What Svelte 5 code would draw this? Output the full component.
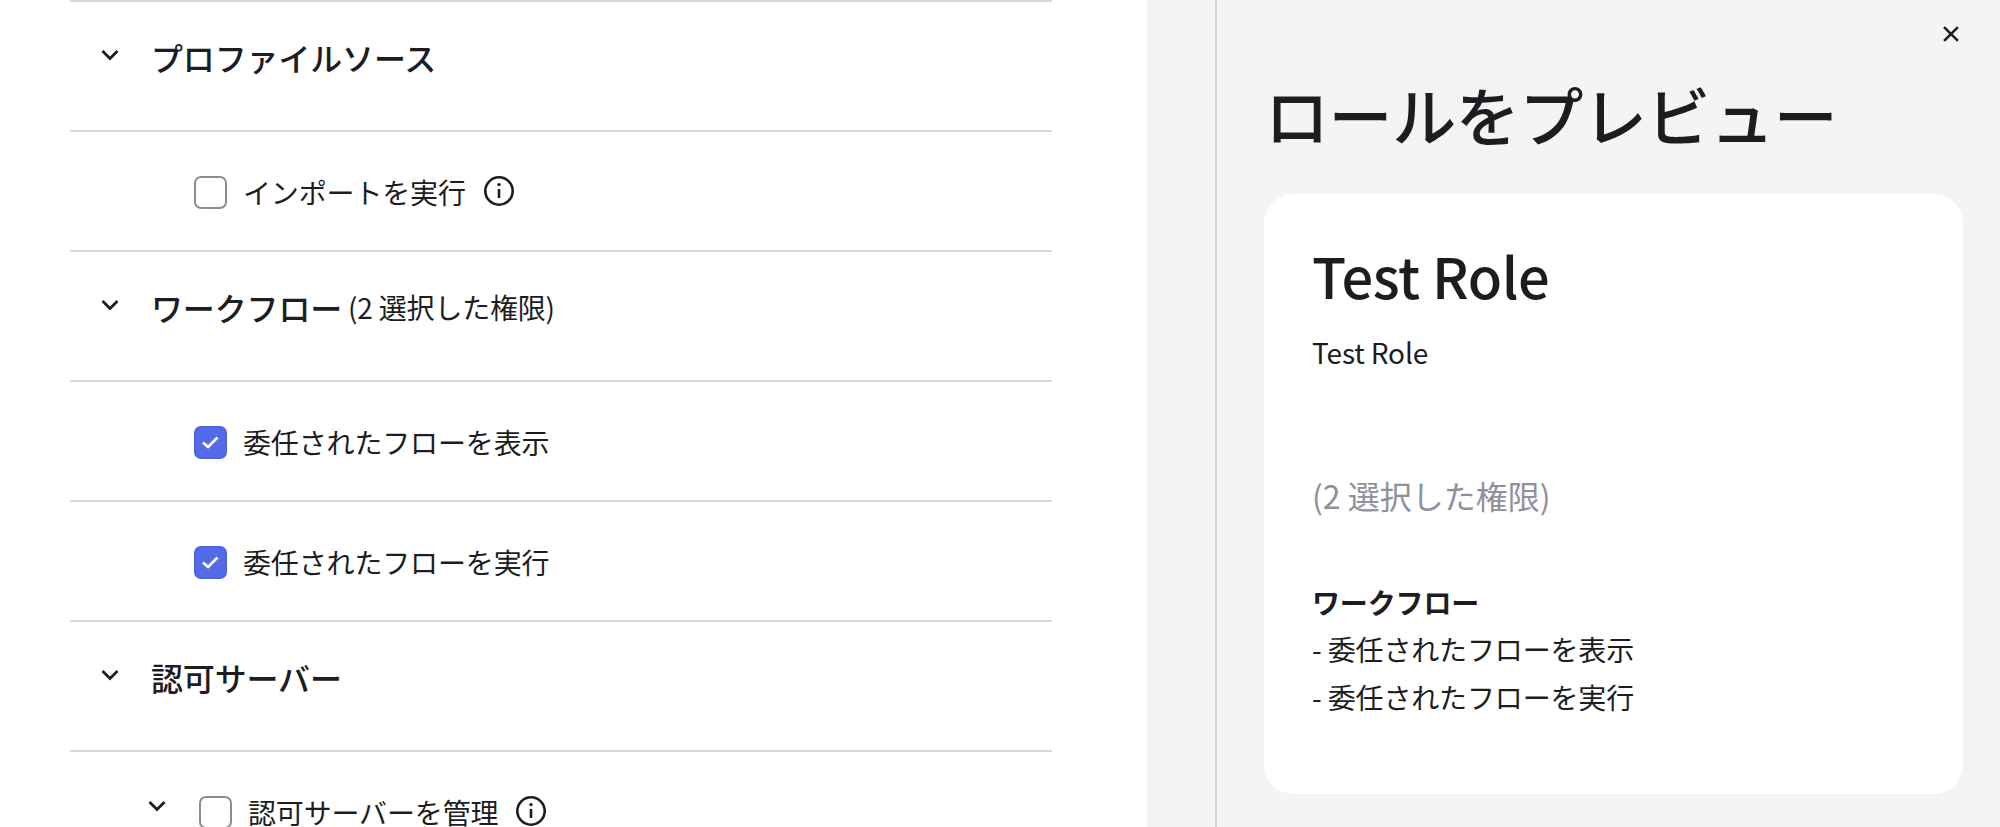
<script lang="ts">
  type Permission = { label: string; checked: boolean; info?: boolean; nested?: boolean }
  type Section = { title: string; selected?: string; permissions: Permission[] }

  const sections: Section[] = [
    { title: 'プロファイルソース', permissions: [{ label: 'インポートを実行', checked: false, info: true }] },
    {
      title: 'ワークフロー',
      selected: '(2 選択した権限)',
      permissions: [
        { label: '委任されたフローを表示', checked: true },
        { label: '委任されたフローを実行', checked: true },
      ],
    },
    { title: '認可サーバー', permissions: [{ label: '認可サーバーを管理', checked: false, info: true, nested: true }] },
  ]
</script>

{#snippet chevron()}
  <svg class="chevron" viewBox="0 0 18 12" aria-hidden="true">
    <path d="M1.5 2 L9 9.5 L16.5 2" />
  </svg>
{/snippet}

<div class="page">
  <main class="permissions">
    {#each sections as section}
      <div class="section-head">
        {@render chevron()}
        <h3>{section.title}</h3>
        {#if section.selected}
          <span class="selected">{section.selected}</span>
        {/if}
      </div>
      {#each section.permissions as permission}
        <div class="permission" class:nested={permission.nested}>
          {#if permission.nested}
            {@render chevron()}
          {/if}
          <span class="checkbox" class:checked={permission.checked}>
            {#if permission.checked}
              <svg viewBox="0 0 29 29" aria-hidden="true"><path d="M7 14.5 L12 19 L21.5 9.5" /></svg>
            {/if}
          </span>
          <span class="label">{permission.label}</span>
          {#if permission.info}
            <svg class="info" viewBox="0 0 30 30" aria-hidden="true">
              <circle cx="15" cy="15" r="13.7" />
              <path d="M15 13 V22" />
              <circle class="dot" cx="15" cy="8.6" r="1.7" />
            </svg>
          {/if}
        </div>
      {/each}
    {/each}
  </main>

  <aside class="preview-pane">
    <div class="preview">
      <button class="close" type="button" aria-label="閉じる">
        <svg viewBox="0 0 15 15" aria-hidden="true"><path d="M1 1 L14 14 M14 1 L1 14" /></svg>
      </button>
      <h1>ロールをプレビュー</h1>
      <section class="card">
        <h2>Test Role</h2>
        <p class="description">Test Role</p>
        <p class="count">(2 選択した権限)</p>
        <p class="group"><strong>ワークフロー</strong></p>
        <p>- 委任されたフローを表示</p>
        <p>- 委任されたフローを実行</p>
      </section>
    </div>
  </aside>
</div>

<style>
  :global(body) {
    margin: 0;
    background: #fff;
  }

  .page {
    display: flex;
    height: 827px;
    overflow: hidden;
    font-family: "Noto Sans CJK JP", "Noto Sans", sans-serif;
    color: #1d1d21;
  }

  .permissions {
    width: 982px;
    flex-shrink: 0;
    padding-left: 70px;
    padding-right: 95px;
  }

  .section-head {
    display: flex;
    align-items: flex-start;
    height: 130px;
    padding: 33px 0 0 31px;
    box-sizing: border-box;
    border-top: 2px solid #d7d7dc;
  }

  .section-head .chevron {
    margin-top: 14px;
  }

  .chevron {
    width: 18px;
    height: 12px;
    flex-shrink: 0;
    fill: none;
    stroke: #1d1d21;
    stroke-width: 2.8;
  }

  h3 {
    margin: 0 0 0 32px;
    font-size: 32px;
    font-weight: 500;
    line-height: 44px;
    letter-spacing: -0.15px;
  }

  .selected {
    margin-left: 6px;
    font-size: 28px;
    line-height: 44px;
    letter-spacing: -0.2px;
  }

  .permission {
    display: flex;
    align-items: flex-start;
    height: 120px;
    padding: 44px 0 0 124px;
    box-sizing: border-box;
    border-top: 2px solid #d7d7dc;
  }

  .permission.nested {
    padding-left: 78px;
  }

  .permission .chevron {
    margin: 0 33px 0 0;
    position: relative;
    top: 4px;
  }

  .checkbox {
    width: 33px;
    height: 33px;
    flex-shrink: 0;
    box-sizing: border-box;
    border: 2px solid #8c8c96;
    border-radius: 7px;
    background: #fff;
  }

  .checkbox.checked {
    border-color: #4c64e1;
    background: #546be7;
  }

  .checkbox svg {
    display: block;
    width: 100%;
    height: 100%;
    fill: none;
    stroke: #fff;
    stroke-width: 2.6;
  }

  .label {
    margin-left: 16px;
    font-size: 28px;
    line-height: 33px;
    letter-spacing: -0.15px;
  }

  .info {
    width: 30px;
    height: 30px;
    margin-left: 18px;
    flex-shrink: 0;
    fill: none;
    stroke: #1d1d21;
    stroke-width: 2.6;
  }

  .info .dot {
    fill: #1d1d21;
    stroke: none;
  }

  .preview-pane {
    flex: 1;
    background: #f4f4f4;
    padding-left: 68px;
  }

  .preview {
    position: relative;
    height: 100%;
    box-sizing: border-box;
    border-left: 2px solid #d4d4d8;
    padding: 66px 37px 0 47px;
  }

  .close {
    position: absolute;
    top: 26px;
    right: 41px;
    width: 16px;
    height: 16px;
    padding: 0;
    border: 0;
    background: none;
  }

  .close svg {
    display: block;
    width: 100%;
    height: 100%;
    fill: none;
    stroke: #1d1d21;
    stroke-width: 2.4;
  }

  h1 {
    margin: 0 0 34px 1px;
    font-size: 64px;
    font-weight: 500;
    line-height: 94px;
    letter-spacing: -0.4px;
    color: #1d1d21;
  }

  .card {
    height: 600px;
    box-sizing: border-box;
    padding: 44px 48px;
    border-radius: 30px;
    background: #fff;
  }

  h2 {
    margin: 0 0 20px;
    font-size: 56px;
    font-weight: 500;
    line-height: 74px;
    letter-spacing: -0.4px;
  }

  .card p {
    margin: 0;
    font-size: 28px;
    line-height: 48px;
    letter-spacing: -0.15px;
  }

  .card .description {
    line-height: 40px;
  }

  .card .count {
    margin-top: 101px;
    font-size: 32px;
    line-height: 44px;
    letter-spacing: 0;
    color: #8f8f9d;
  }

  .card .group {
    margin-top: 62px;
    line-height: 46px;
  }

  .card strong {
    font-weight: 700;
  }
</style>
